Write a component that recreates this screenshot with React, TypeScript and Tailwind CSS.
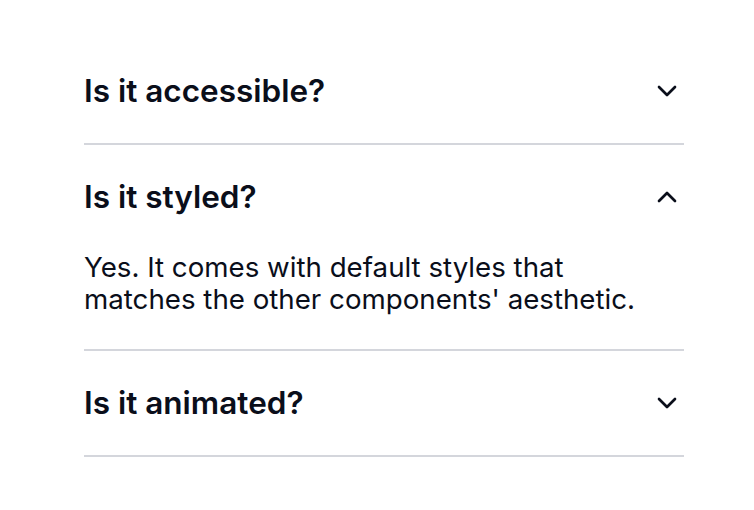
import { ChevronDown, ChevronUp } from 'lucide-react';

const ITEMS = [
  { q: 'Is it accessible?', a: '', open: false },
  {
    q: 'Is it styled?',
    a: "Yes. It comes with default styles that matches the other components' aesthetic.",
    open: true,
  },
  { q: 'Is it animated?', a: '', open: false },
];

export default function App() {
  return (
    <div className="min-h-screen bg-white pt-[39px] pl-[84px] font-['Inter',sans-serif] text-[#0a0e1a]">
      <div className="w-[600px]">
        {ITEMS.map((item) => (
          <div key={item.q} className="border-b-2 border-[#d4d6dc]">
            <button className="flex h-[104px] w-full items-center justify-between text-left">
              <span className="text-[31.5px] font-semibold leading-[40px]">{item.q}</span>
              {item.open ? (
                <ChevronUp size={32} strokeWidth={2} className="mr-[1px]" />
              ) : (
                <ChevronDown size={32} strokeWidth={2} className="mr-[1px]" />
              )}
            </button>
            {item.open && (
              <div className="pt-[2px] pb-[34px] pr-[30px] text-[27.7px] leading-[32px]">
                {item.a}
              </div>
            )}
          </div>
        ))}
      </div>
    </div>
  );
}
